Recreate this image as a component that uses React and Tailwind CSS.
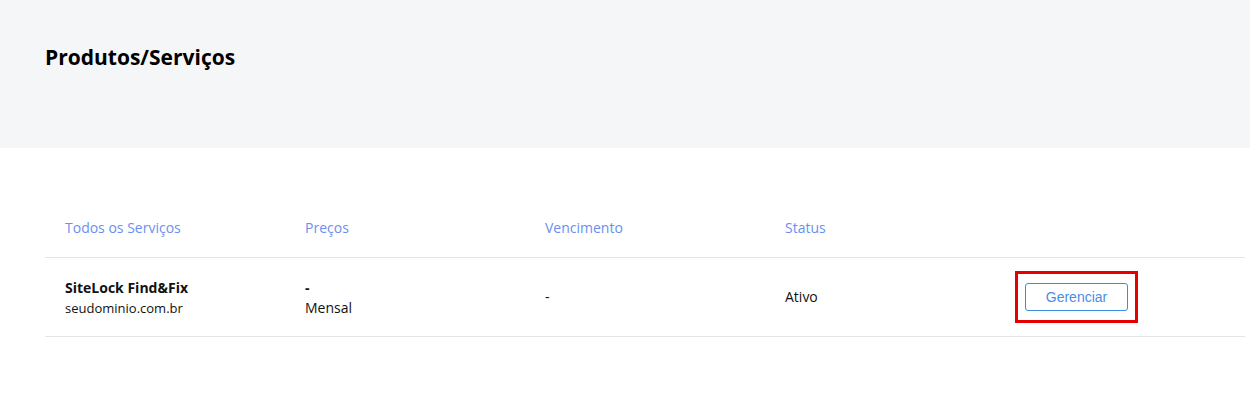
export default function App() {
  const font = { fontFamily: '"Open Sans", "Liberation Sans", sans-serif' };
  return (
    <div className="min-h-[409px] bg-white" style={font}>
      <div className="h-[148px] bg-[#f5f6f8] pl-[45px] pt-[42px]">
        <h1 className="text-[21px] font-bold text-black leading-[30px]">Produtos/Serviços</h1>
      </div>

      <div className="ml-[45px] mr-[5px] mt-[52px]">
        <div className="grid grid-cols-[240px_240px_240px_240px_1fr] items-center h-[58px] pb-[2px] border-b border-[#e5e5e5] px-[20px] text-[14px] text-[#6a8ff0]">
          <div>Todos os Serviços</div>
          <div>Preços</div>
          <div>Vencimento</div>
          <div>Status</div>
          <div></div>
        </div>
        <div className="grid grid-cols-[240px_240px_240px_240px_1fr] items-center h-[79px] border-b border-[#e5e5e5] px-[20px] text-[14px] text-[#111] leading-[20px]">
          <div className="pt-[2px]">
            <div className="font-bold">SiteLock Find&amp;Fix</div>
            <div className="text-[13px]">seudominio.com.br</div>
          </div>
          <div className="pt-[2px]">
            <div className="font-bold">-</div>
            <div>Mensal</div>
          </div>
          <div>-</div>
          <div>Ativo</div>
          <div>
            <div className="-ml-[10px] inline-block border-[3px] border-[#e60000] px-[7px] py-[9px]">
              <button
                className="w-[103px] h-[28px] border border-[#3b8be0] rounded-[3px] bg-white text-[14px] text-[#4a8ee6]"
                style={{ fontFamily: '"Liberation Sans", Arial, sans-serif' }}
              >
                Gerenciar
              </button>
            </div>
          </div>
        </div>
      </div>
    </div>
  );
}
